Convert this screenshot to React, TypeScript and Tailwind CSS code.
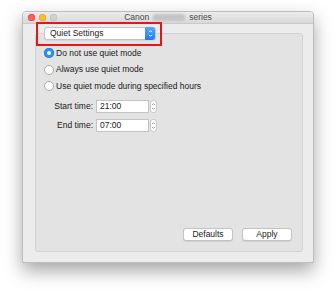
import React from "react";

function Radio({ checked }: { checked?: boolean }) {
  return checked ? (
    <span className="flex h-[10px] w-[10px] items-center justify-center rounded-full bg-[#2b8ff5] shadow-[inset_0_0_0_0.5px_#1b6fd1]">
      <span className="h-[4px] w-[4px] rounded-full bg-white" />
    </span>
  ) : (
    <span className="h-[10px] w-[10px] rounded-full border border-[#a9a9a9] bg-white" />
  );
}

function Stepper() {
  return (
    <span className="flex h-[13px] w-[7px] flex-col items-center justify-center rounded-[3px] border border-[#c8c8c8] bg-white">
      <svg width="5" height="9" viewBox="0 0 5 9">
        <path d="M1 3.2 L2.5 1.7 L4 3.2 M1 5.8 L2.5 7.3 L4 5.8" stroke="#8a8a8a" strokeWidth="0.9" fill="none" />
      </svg>
    </span>
  );
}

export default function App() {
  const font = { fontFamily: '"Liberation Sans", Arial, sans-serif' };
  return (
    <div className="relative h-[296px] w-[335px] overflow-hidden bg-white pl-[22px] pt-[11px]" style={font}>
      <div className="h-[252px] w-[292px] overflow-hidden rounded-t-[4px] border border-[#bdbdbd] bg-[#ececec] shadow-[0_8px_18px_rgba(0,0,0,0.35)]">
        {/* title bar */}
        <div className="relative flex h-[12px] items-center border-b border-[#c9c9c9] bg-gradient-to-b from-[#ececec] to-[#d9d9d9]">
          <div className="flex items-center gap-[4px] pl-[5px]">
            <span className="h-[7px] w-[7px] rounded-full bg-[#fc5f57] shadow-[inset_0_0_0_0.5px_#de3f37]" />
            <span className="h-[7px] w-[7px] rounded-full bg-[#fdbc2e] shadow-[inset_0_0_0_0.5px_#dea123]" />
            <span className="h-[7px] w-[7px] rounded-full bg-[#d0d0d0] shadow-[inset_0_0_0_0.5px_#b8b8b8]" />
          </div>
          <div className="absolute inset-0 flex items-center justify-center text-[8.5px] leading-none text-[#4a4a4a]">
            <span>Canon</span>
            <span className="mx-[4px] h-[7px] w-[32px] rounded-[2px] bg-[#c4c4c4] blur-[1px]" />
            <span>series</span>
          </div>
        </div>
        {/* body */}
        <div className="pt-[3px]">
          <div className="relative z-10 ml-[21px] flex h-[13px] w-[112px] items-center justify-between rounded-[3px] border border-[#c4c4c4] bg-white pl-[5px] shadow-[0_0.5px_0.5px_rgba(0,0,0,0.1)]">
            <span className="text-[8.5px] leading-none text-[#1a1a1a]">Quiet Settings</span>
            <span className="flex h-[13px] w-[10px] items-center justify-center rounded-r-[3px] bg-gradient-to-b from-[#56a8fb] to-[#1a7cf1]">
              <svg width="5" height="9" viewBox="0 0 5 9">
                <path d="M1 3.2 L2.5 1.7 L4 3.2 M1 5.8 L2.5 7.3 L4 5.8" stroke="#fff" strokeWidth="1" fill="none" />
              </svg>
            </span>
          </div>
          <div className="-mt-[7px] ml-[12px] flex h-[219px] w-[268px] flex-col rounded-[3px] border border-[#d3d3d3] bg-[#e3e3e3] text-[8.5px] leading-none text-[#1a1a1a]">
            <div className="flex flex-col gap-[6.5px] pl-[8px] pt-[14px]">
              <div className="flex h-[10px] items-center gap-[2px]">
                <Radio checked />
                <span>Do not use quiet mode</span>
              </div>
              <div className="flex h-[10px] items-center gap-[2px]">
                <Radio />
                <span>Always use quiet mode</span>
              </div>
              <div className="flex h-[10px] items-center gap-[2px]">
                <Radio />
                <span>Use quiet mode during specified hours</span>
              </div>
            </div>
            <div className="mt-[9px] flex flex-col gap-[6px] pl-[16px]">
              <div className="flex items-center">
                <span className="w-[41px] text-right">Start time:</span>
                <span className="ml-[3px] flex h-[13px] w-[53px] items-center border border-[#c4c4c4] bg-white pl-[3px]">21:00</span>
                <span className="ml-[1px]"><Stepper /></span>
              </div>
              <div className="flex items-center">
                <span className="w-[41px] text-right">End time:</span>
                <span className="ml-[3px] flex h-[13px] w-[53px] items-center border border-[#c4c4c4] bg-white pl-[3px]">07:00</span>
                <span className="ml-[1px]"><Stepper /></span>
              </div>
            </div>
            <div className="mt-auto mb-[10px] flex justify-end gap-[9px] pr-[10px]">
              <span className="flex h-[13px] w-[50px] items-center justify-center rounded-[3px] border border-[#c2c2c2] bg-white shadow-[0_0.5px_0.5px_rgba(0,0,0,0.15)]">Defaults</span>
              <span className="flex h-[13px] w-[50px] items-center justify-center rounded-[3px] border border-[#c2c2c2] bg-white shadow-[0_0.5px_0.5px_rgba(0,0,0,0.15)]">Apply</span>
            </div>
          </div>
        </div>
      </div>
      {/* red annotation */}
      <div className="absolute left-[36px] top-[22px] h-[24px] w-[126px] border-2 border-[#e8141a]" />
    </div>
  );
}
